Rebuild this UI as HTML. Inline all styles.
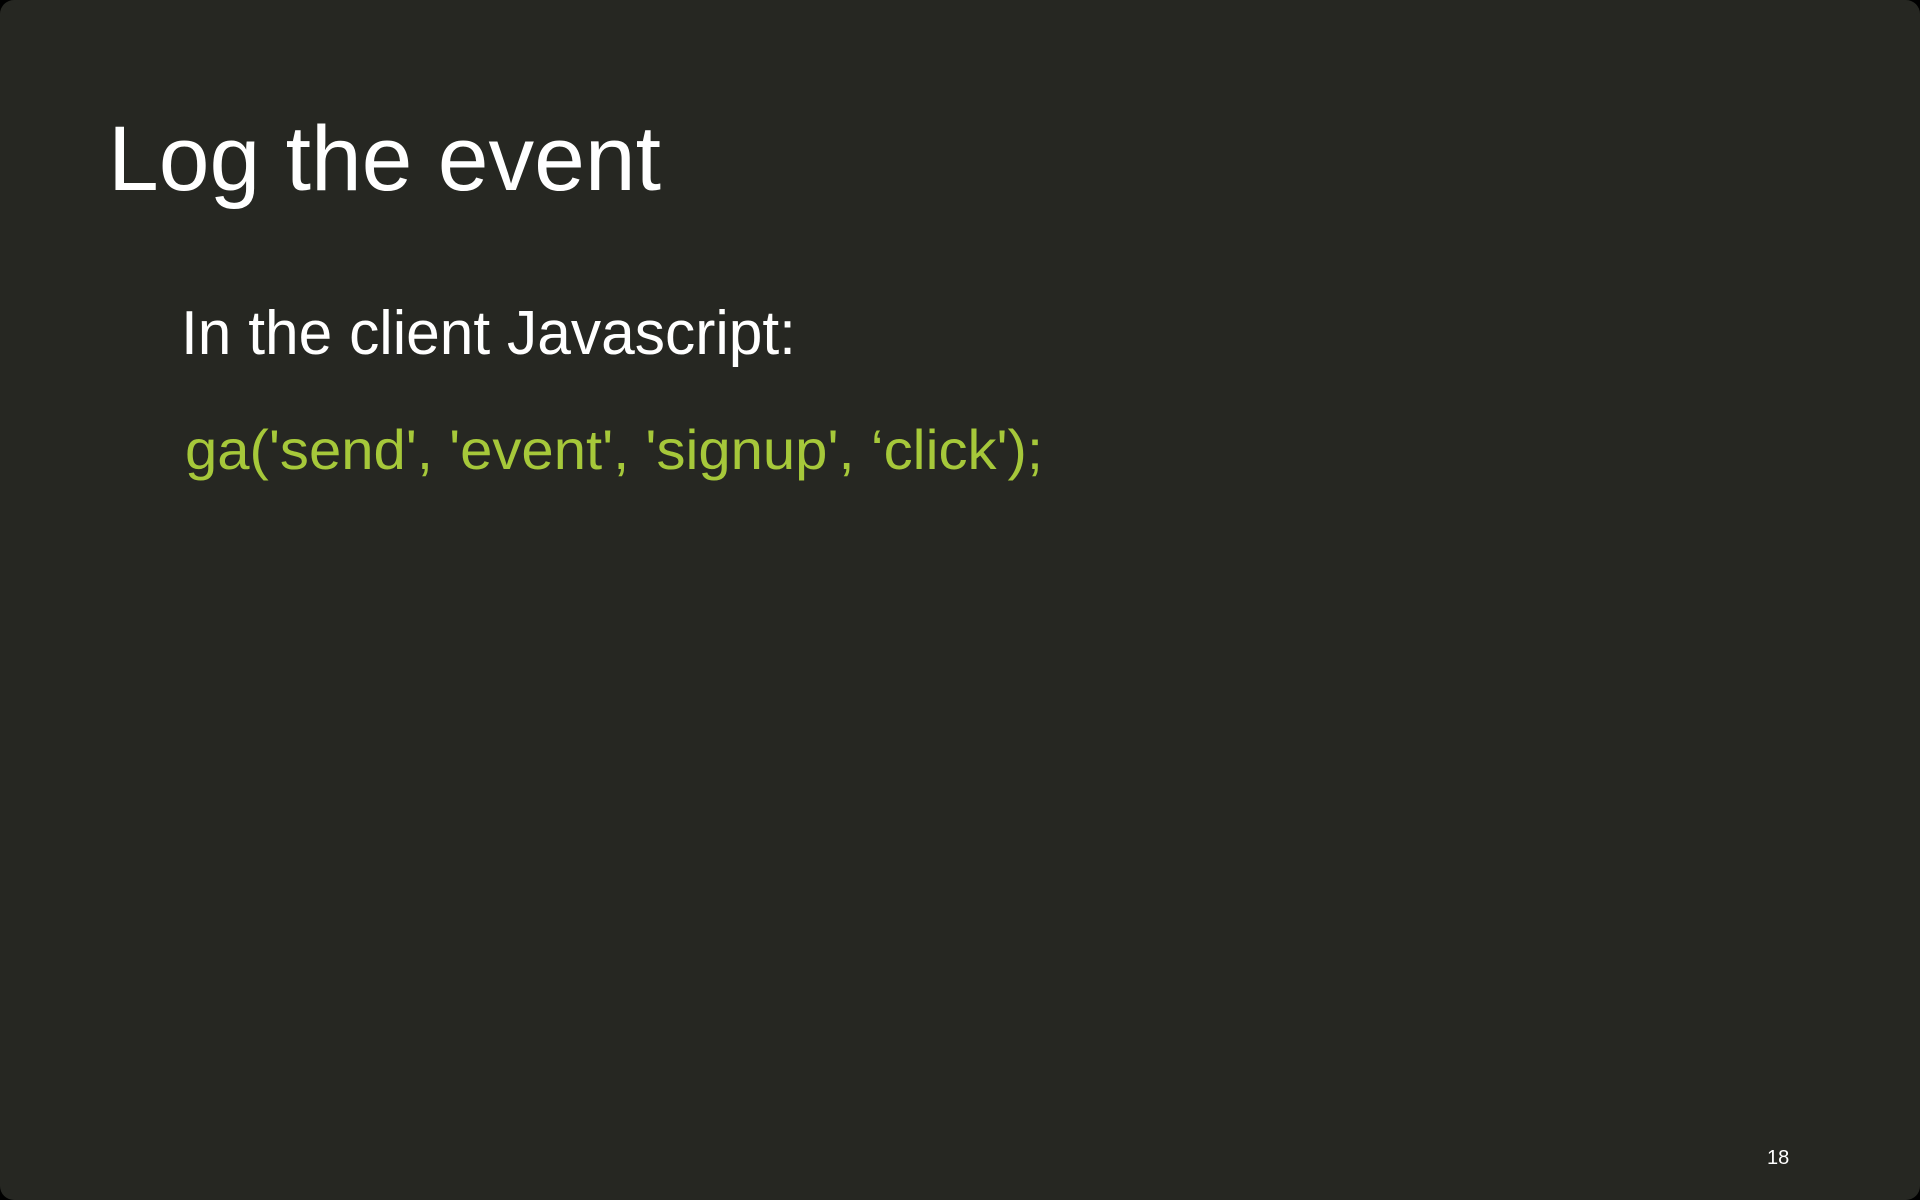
<!DOCTYPE html>
<html><head><meta charset="utf-8"><style>
html,body{margin:0;padding:0;background:#000;}
body{width:1920px;height:1200px;overflow:hidden;}
.s{width:1920px;height:1200px;background:#262722;border-radius:14px;position:relative;}
svg{position:absolute;left:0;top:0;}
</style></head><body><div class="s">
<svg width="1920" height="1200" xmlns="http://www.w3.org/2000/svg">
<text x="108" y="190" font-family="Liberation Sans, sans-serif" font-size="92" fill="#ffffff" textLength="553" lengthAdjust="spacingAndGlyphs">Log the event</text>
<text x="181" y="354" font-family="Liberation Sans, sans-serif" font-size="62" fill="#ffffff" textLength="615" lengthAdjust="spacingAndGlyphs">In the client Javascript:</text>
<text x="185" y="469" font-family="Liberation Sans, sans-serif" font-size="56" fill="#a6c83a" textLength="858" lengthAdjust="spacingAndGlyphs">ga('send', 'event', 'signup', ‘click');</text>
<text x="1767" y="1164" font-family="Liberation Sans, sans-serif" font-size="20" fill="#ffffff">18</text>
</svg>
</div></body></html>
